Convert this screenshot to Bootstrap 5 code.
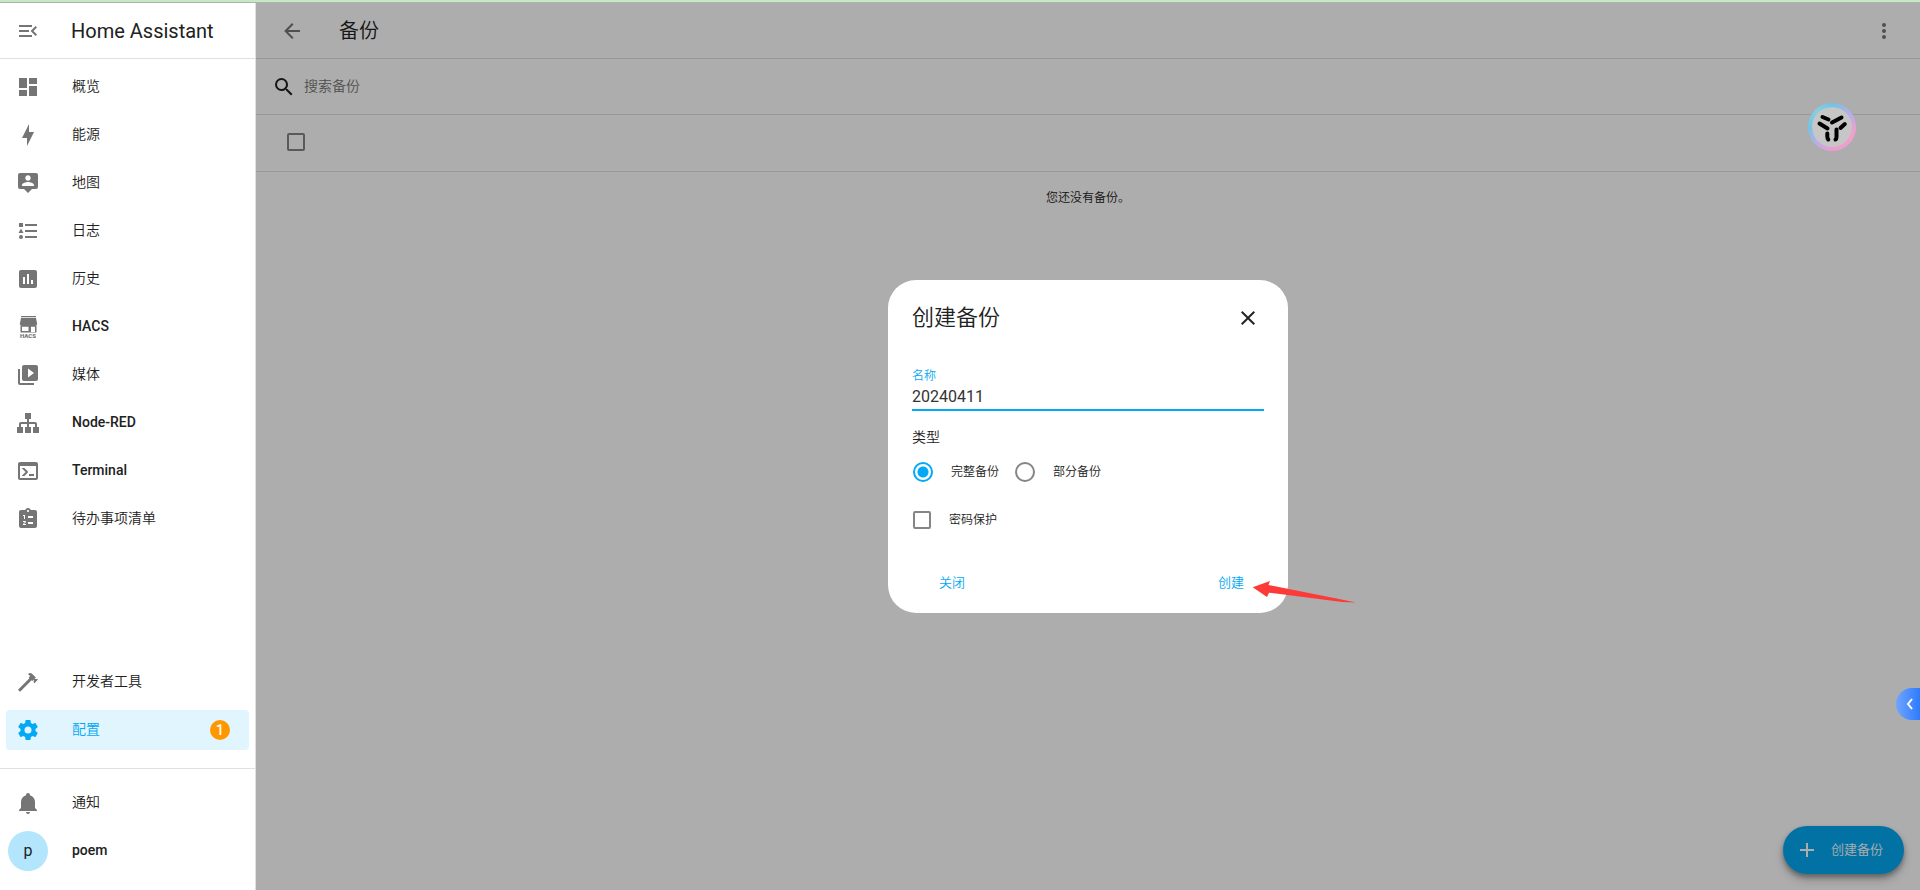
<!DOCTYPE html>
<html lang="zh-CN">
<head>
<meta charset="utf-8">
<meta name="viewport" content="width=device-width, initial-scale=1">
<title>备份 – Home Assistant</title>
<link href="https://cdn.jsdelivr.net/npm/bootstrap@5.3.0/dist/css/bootstrap.min.css" rel="stylesheet">
<script src="https://cdn.jsdelivr.net/npm/bootstrap@5.3.0/dist/js/bootstrap.bundle.min.js" defer></script>
<style>
  :root { --ha-primary: #03a9f4; --ha-text: #212121; --ha-icon: #757575; --ha-line: #e0e0e0; }
  body { font-family: Roboto, "Noto Sans CJK SC", sans-serif; font-size: 14px; line-height: 20px; color: var(--ha-text); }
  svg { display: block; fill: currentColor; flex: none; }
  .zh { font-weight: 350 !important; }
  .top-strip { height: 3px; background: #c8e6c9; border-bottom: 1px solid #a0bfa2; }
  .ha-sidebar { width: 256px; border-right: 1px solid var(--ha-line); }
  .ha-bar { height: 56px; border-bottom: 1px solid var(--ha-line); }
  .ha-bar-title { font-size: 20px; line-height: 28px; font-weight: 400; padding-left: 15px; }
  .ha-item { height: 40px; margin: 0 6px 8px; padding: 0 12px 0 10px; border-radius: 4px; color: var(--ha-text); font-weight: 500; text-decoration: none; }
  .ha-item svg { color: var(--ha-icon); margin-right: 32px; }
  .ha-item .caption { padding-bottom: 2px; }
  .ha-item.active, .ha-item.active svg { color: var(--ha-primary); }
  .ha-item.active { background: #e1f5fe; margin-bottom: 18px; }
  .ha-item .count { width: 20px; height: 20px; background: #ff9800; color: #fff; margin-right: 7px; }
  .ha-foot { border-top: 1px solid var(--ha-line); padding: 14px 0 11px; }
  .avatar { width: 40px; height: 40px; background: #b3e5fc; font-size: 16px; font-weight: 400; margin: 0 24px 0 -8px; }
  .ha-icon-btn { border: 0; background: none; padding: 0; color: #757575; }
  .ha-search { height: 56px; border-bottom: 1px solid var(--ha-line); padding: 0 16px; }
  .ha-search input { border: 0; outline: 0; background: none; font-size: 14px; padding: 0 0 2px; }
  .ha-search input::placeholder { color: #757575; opacity: 1; }
  .ha-grid-head { height: 57px; border-bottom: 1px solid var(--ha-line); padding: 0 31px 2px; }
  .ha-check { appearance: none; width: 18px; height: 18px; margin: 0; border: 2px solid #858585; border-radius: 2px; }
  .ha-radio { appearance: none; width: 20px; height: 20px; margin: 0; border: 2px solid #858585; border-radius: 50%; }
  .ha-radio:checked { border-color: var(--ha-primary); background: radial-gradient(circle, var(--ha-primary) 5px, transparent 6px); }
  .small-text { font-size: 12px; line-height: 20px; }
  .fab { right: 16px; bottom: 16px; height: 48px; border: 0; border-radius: 24px; padding: 0 21px 0 12px; gap: 12px; background: var(--ha-primary); color: #fff; font-size: 13px; box-shadow: 0 3px 5px rgba(0,0,0,.3), 0 6px 10px rgba(0,0,0,.2); }
  .scrim { background: rgba(0,0,0,.32); }
  .ha-dialog { width: 400px; border-radius: 28px; background: #fff; padding: 24px 24px 12px; }
  .ha-dialog h2 { font-size: 22px; line-height: 28px; margin: 0; }
  .ha-field { border-bottom: 2px solid var(--ha-primary); margin-top: 34px; }
  .ha-field label { display: block; color: var(--ha-primary); font-size: 12px; line-height: 20px; }
  .ha-field input { display: block; width: 100%; border: 0; outline: 0; padding: 0 0 3px; font-size: 16px; line-height: 20px; height: 23px; color: #333; }
  .choice { padding-left: 1px; }
  .choice label { margin-left: 18px; }
  .kinds { margin-top: 15px; gap: 16px; }
  .protect { margin-top: 28px; }
  .actions { margin-top: 35px; padding-left: 7px; }
  .text-btn { border: 0; background: none; padding: 0 20px; height: 36px; color: var(--ha-primary); font-size: 13px; }
  .arrow-mark { left: 364px; top: 300px; color: #fc3b38; }
  .float-logo { right: 64px; top: 100px; width: 48px; height: 48px; padding: 0; border: 0; background: conic-gradient(#70c4e4, #b4aeeb 15%, #f2a0cc 28%, #ee9bd0 50%, #b8aeea 62%, #70c4e4 75%, #86cfe0 88%, #70c4e4); color: #000; }
  .side-tab { right: 0; top: 685px; width: 24px; height: 32px; border: 0; padding: 0 0 0 9px; border-radius: 16px 0 0 16px; background: linear-gradient(90deg, #71a5ff, #2e7bff); color: #fff; }
</style>
</head>
<body>
<div class="d-flex flex-column vh-100 overflow-hidden">
  <div class="top-strip flex-shrink-0"></div>
  <div class="d-flex flex-grow-1">
    <nav class="ha-sidebar d-flex flex-column flex-shrink-0 bg-white">
      <div class="ha-bar d-flex align-items-center ps-3">
        <button class="ha-icon-btn" aria-label="菜单"><svg width="24" height="24" viewBox="0 0 24 24"><path d="M21,15.61L19.59,17L14.58,12L19.59,7L21,8.39L17.44,12L21,15.61M3,6H16V8H3V6M3,13V11H13V13H3M3,18V16H16V18H3Z"/></svg></button>
        <span class="ha-bar-title ms-3">Home Assistant</span>
      </div>
      <div class="pt-2 flex-grow-1">
        <a href="#" class="ha-item d-flex align-items-center"><svg width="24" height="24" viewBox="0 0 24 24"><path d="M13,3V9H21V3M13,21H21V11H13M3,21H11V15H3M3,13H11V3H3V13Z"/></svg><span class="caption zh">概览</span></a>
        <a href="#" class="ha-item d-flex align-items-center"><svg width="24" height="24" viewBox="0 0 24 24"><path d="M11 15H6L13 1V9H18L11 23V15Z"/></svg><span class="caption zh">能源</span></a>
        <a href="#" class="ha-item d-flex align-items-center"><svg width="24" height="24" viewBox="0 0 24 24"><path d="M20,2H4A2,2 0 0,0 2,4V16A2,2 0 0,0 4,18H8L12,22L16,18H20A2,2 0 0,0 22,16V4A2,2 0 0,0 20,2M12,4.3C13.5,4.3 14.7,5.5 14.7,7C14.7,8.5 13.5,9.7 12,9.7C10.5,9.7 9.3,8.5 9.3,7C9.3,5.5 10.5,4.3 12,4.3M18,15H6V14.1C6,12.1 10,11 12,11C14,11 18,12.1 18,14.1V15Z"/></svg><span class="caption zh">地图</span></a>
        <a href="#" class="ha-item d-flex align-items-center"><svg width="24" height="24" viewBox="0 0 24 24"><path d="M5,9.5L7.5,14H2.5L5,9.5M3,4H7V8H3V4M5,20A2,2 0 0,0 7,18A2,2 0 0,0 5,16A2,2 0 0,0 3,18A2,2 0 0,0 5,20M9,5V7H21V5H9M9,19H21V17H9V19M9,13H21V11H9V13Z"/></svg><span class="caption zh">日志</span></a>
        <a href="#" class="ha-item d-flex align-items-center"><svg width="24" height="24" viewBox="0 0 24 24"><path d="M17 17H15V13H17M13 17H11V7H13M9 17H7V10H9M19 3H5C3.89 3 3 3.89 3 5V19C3 20.11 3.9 21 5 21H19C20.11 21 21 20.11 21 19V5C21 3.89 20.1 3 19 3Z"/></svg><span class="caption zh">历史</span></a>
        <a href="#" class="ha-item d-flex align-items-center"><svg width="24" height="24" viewBox="0 0 24 24"><path d="M5 1H20V2.200H5ZM5 3H20L21.200 9Q21 10.500 19 10.500H6Q4 10.500 3.800 9ZM4.500 10.500H20.500V17.500H4.500ZM6 11.800V16H12.500V11.800ZM15 11.800V17H19V11.800Z" fill-rule="evenodd"/><text x="4" y="23" font-size="6" font-weight="900">HACS</text></svg><span class="caption">HACS</span></a>
        <a href="#" class="ha-item d-flex align-items-center"><svg width="24" height="24" viewBox="0 0 24 24"><path d="M4,6H2V20A2,2 0 0,0 4,22H18V20H4V6M20,2H8A2,2 0 0,0 6,4V16A2,2 0 0,0 8,18H20A2,2 0 0,0 22,16V4A2,2 0 0,0 20,2M12,14.500V5.500L18,10L12,14.500Z"/></svg><span class="caption zh">媒体</span></a>
        <a href="#" class="ha-item d-flex align-items-center"><svg width="24" height="24" viewBox="0 0 24 24"><path d="M9,2V8H11V11H5C3.890,11 3,11.890 3,13V16H1V22H7V16H5V13H11V16H9V22H15V16H13V13H19V16H17V22H23V16H21V13C21,11.890 20.110,11 19,11H13V8H15V2H9Z"/></svg><span class="caption">Node-RED</span></a>
        <a href="#" class="ha-item d-flex align-items-center"><svg width="24" height="24" viewBox="0 0 24 24"><path d="M20,19V7H4V19H20M20,3A2,2 0 0,1 22,5V19A2,2 0 0,1 20,21H4A2,2 0 0,1 2,19V5C2,3.890 2.900,3 4,3H20M13,17V15H18V17H13M9.580,13L5.570,9H8.400L11.700,12.300C12.090,12.690 12.090,13.330 11.700,13.720L8.420,17H5.590L9.580,13Z"/></svg><span class="caption">Terminal</span></a>
        <a href="#" class="ha-item d-flex align-items-center"><svg width="24" height="24" viewBox="0 0 24 24"><path fill-rule="evenodd" d="M19 3H14.820C14.400 1.840 13.300 1 12 1S9.600 1.840 9.180 3H5C3.900 3 3 3.900 3 5V19C3 20.100 3.900 21 5 21H19C20.100 21 21 20.100 21 19V5C21 3.900 20.100 3 19 3M12 3C12.550 3 13 3.450 13 4S12.550 5 12 5 11 4.550 11 4 11.450 3 12 3M7 8H9V12H8V9H7V8M10 17V18H7V17.080L9 15H7V14H9.250C9.660 14 10 14.340 10 14.750C10 14.950 9.920 15.140 9.790 15.270L8.120 17H10M17 17H12V15H17V17M17 11H12V9H17V11Z"/></svg><span class="caption zh">待办事项清单</span></a>
      </div>
      <div>
        <a href="#" class="ha-item d-flex align-items-center"><svg width="24" height="24" viewBox="0 0 24 24"><path d="M2,19.630L13.430,8.200L12.720,7.500L14.140,6.070L12,3.890C13.200,2.700 15.090,2.700 16.270,3.890L19.870,7.500L18.450,8.910H21.290L22,9.620L18.450,13.210L17.740,12.500V9.620L16.270,11.040L15.560,10.330L4.130,21.760L2,19.630Z"/></svg><span class="caption zh">开发者工具</span></a>
        <a href="#" class="ha-item active d-flex align-items-center"><svg width="24" height="24" viewBox="0 0 24 24"><path d="M12,15.500A3.500,3.500 0 0,1 8.500,12A3.500,3.500 0 0,1 12,8.500A3.500,3.500 0 0,1 15.500,12A3.500,3.500 0 0,1 12,15.500M19.430,12.970C19.470,12.650 19.500,12.330 19.500,12C19.500,11.670 19.470,11.340 19.430,11L21.540,9.370C21.730,9.220 21.780,8.950 21.660,8.730L19.660,5.270C19.540,5.050 19.270,4.960 19.050,5.050L16.560,6.050C16.040,5.660 15.500,5.320 14.870,5.070L14.500,2.420C14.460,2.180 14.250,2 14,2H10C9.750,2 9.540,2.180 9.500,2.420L9.130,5.070C8.500,5.320 7.960,5.660 7.440,6.050L4.950,5.050C4.730,4.960 4.460,5.050 4.340,5.270L2.340,8.730C2.210,8.950 2.270,9.220 2.460,9.370L4.570,11C4.530,11.340 4.500,11.670 4.500,12C4.500,12.330 4.530,12.650 4.570,12.970L2.460,14.630C2.270,14.780 2.210,15.050 2.340,15.270L4.340,18.730C4.460,18.950 4.730,19.030 4.950,18.950L7.440,17.940C7.960,18.340 8.500,18.680 9.130,18.930L9.500,21.580C9.540,21.820 9.750,22 10,22H14C14.250,22 14.460,21.820 14.500,21.580L14.870,18.930C15.500,18.670 16.040,18.340 16.560,17.940L19.050,18.950C19.270,19.030 19.540,18.950 19.660,18.730L21.660,15.270C21.780,15.050 21.730,14.780 21.540,14.630L19.430,12.970Z"/></svg><span class="caption zh">配置</span><span class="count ms-auto rounded-circle d-flex align-items-center justify-content-center">1</span></a>
      </div>
      <div class="ha-foot">
        <a href="#" class="ha-item d-flex align-items-center"><svg width="24" height="24" viewBox="0 0 24 24"><path d="M21,19V20H3V19L5,17V11C5,7.900 7.030,5.170 10,4.290C10,4.190 10,4.100 10,4A2,2 0 0,1 12,2A2,2 0 0,1 14,4C14,4.100 14,4.190 14,4.290C16.970,5.170 19,7.900 19,11V17L21,19M14,21A2,2 0 0,1 12,23A2,2 0 0,1 10,21"/></svg><span class="caption zh">通知</span></a>
        <a href="#" class="ha-item d-flex align-items-center"><span class="avatar rounded-circle d-flex align-items-center justify-content-center">p</span><span class="caption">poem</span></a>
      </div>
    </nav>

    <main class="position-relative flex-grow-1">
      <header class="ha-bar d-flex align-items-center px-4">
        <button class="ha-icon-btn" aria-label="返回"><svg width="24" height="24" viewBox="0 0 24 24"><path d="M20,11V13H8L13.500,18.500L12.080,19.920L4.160,12L12.080,4.080L13.500,5.500L8,11H20Z"/></svg></button>
        <h1 class="ha-bar-title zh mb-0 ms-3 me-auto"><span class="ps-1">备份</span></h1>
        <button class="ha-icon-btn" aria-label="更多"><svg width="24" height="24" viewBox="0 0 24 24"><path d="M12,16A2,2 0 0,1 14,18A2,2 0 0,1 12,20A2,2 0 0,1 10,18A2,2 0 0,1 12,16M12,10A2,2 0 0,1 14,12A2,2 0 0,1 12,14A2,2 0 0,1 10,12A2,2 0 0,1 12,10M12,4A2,2 0 0,1 14,6A2,2 0 0,1 12,8A2,2 0 0,1 10,6A2,2 0 0,1 12,4Z"/></svg></button>
      </header>
      <div class="ha-search d-flex align-items-center gap-2">
        <svg width="24" height="24" viewBox="0 0 24 24"><path d="M9.500,3A6.500,6.500 0 0,1 16,9.500C16,11.110 15.410,12.590 14.440,13.730L14.710,14H15.500L20.500,19L19,20.500L14,15.500V14.710L13.730,14.440C12.590,15.410 11.110,16 9.500,16A6.500,6.500 0 0,1 3,9.500A6.500,6.500 0 0,1 9.500,3M9.500,5C7,5 5,7 5,9.500C5,12 7,14 9.500,14C12,14 14,12 14,9.500C14,7 12,5 9.500,5Z"/></svg>
        <input type="text" class="zh flex-grow-1" placeholder="搜索备份" aria-label="搜索备份">
      </div>
      <div class="ha-grid-head d-flex align-items-center"><input type="checkbox" class="ha-check" aria-label="全选"></div>
      <p class="small-text zh text-center pt-3 mb-0">您还没有备份。</p>
      <button class="fab zh position-absolute d-flex align-items-center"><svg width="24" height="24" viewBox="0 0 24 24"><path d="M19,13H13V19H11V13H5V11H11V5H13V11H19V13Z"/></svg>创建备份</button>

      <div class="scrim position-absolute top-0 start-0 w-100 h-100 d-flex align-items-center justify-content-center">
        <form class="ha-dialog position-relative" role="dialog" aria-labelledby="dlg-title">
          <div class="d-flex align-items-center justify-content-between">
            <h2 id="dlg-title" class="zh">创建备份</h2>
            <button type="button" class="ha-icon-btn text-dark me-1" aria-label="关闭对话框"><svg width="24" height="24" viewBox="0 0 24 24"><path d="M19,6.410L17.590,5L12,10.590L6.410,5L5,6.410L10.590,12L5,17.590L6.410,19L12,13.410L17.590,19L19,17.590L13.410,12L19,6.410Z"/></svg></button>
          </div>
          <div class="ha-field">
            <label class="zh" for="bk-name">名称</label>
            <input id="bk-name" type="text" value="20240411">
          </div>
          <div class="zh mt-3">类型</div>
          <div class="kinds zh d-flex small-text">
            <div class="choice d-flex align-items-center"><input class="ha-radio" type="radio" name="kind" id="k-full" checked><label for="k-full">完整备份</label></div>
            <div class="choice ps-0 d-flex align-items-center"><input class="ha-radio" type="radio" name="kind" id="k-part"><label for="k-part">部分备份</label></div>
          </div>
          <div class="choice protect zh d-flex align-items-center small-text"><input class="ha-check" type="checkbox" id="pw"><label for="pw">密码保护</label></div>
          <div class="actions d-flex justify-content-between">
            <button type="button" class="text-btn zh">关闭</button>
            <button type="button" class="text-btn zh">创建</button>
          </div>
          <svg class="arrow-mark position-absolute" width="106" height="24" viewBox="0 0 106 24"><path d="M0.700 7.300L18 1L16.500 5L92 20L104 22.500L90 22L17 12.700L15 17Z"/></svg>
        </form>
      </div>
      <button class="float-logo position-absolute rounded-circle" aria-label="助手"><svg width="48" height="48" viewBox="0 0 48 48"><circle cx="24" cy="24" r="20" fill="#c6c6c6"/><path d="M14.500 14L20.500 16.500M24 19.500L33.500 14.500M11.500 20.500L19.500 25.500M32.500 25L36.800 21M19.300 30.500V33.500Q19.300 35.500 20.300 36.500M28.500 26.500V34Q28.500 36 27.500 36.500" fill="none" stroke="currentColor" stroke-width="4" stroke-linecap="round"/></svg></button>
      <button class="side-tab position-absolute" aria-label="展开"><svg width="10" height="14" viewBox="0 0 10 14"><path d="M7 2L3 7L7 12" fill="none" stroke="currentColor" stroke-width="2"/></svg></button>
    </main>
  </div>
</div>
</body>
</html>
